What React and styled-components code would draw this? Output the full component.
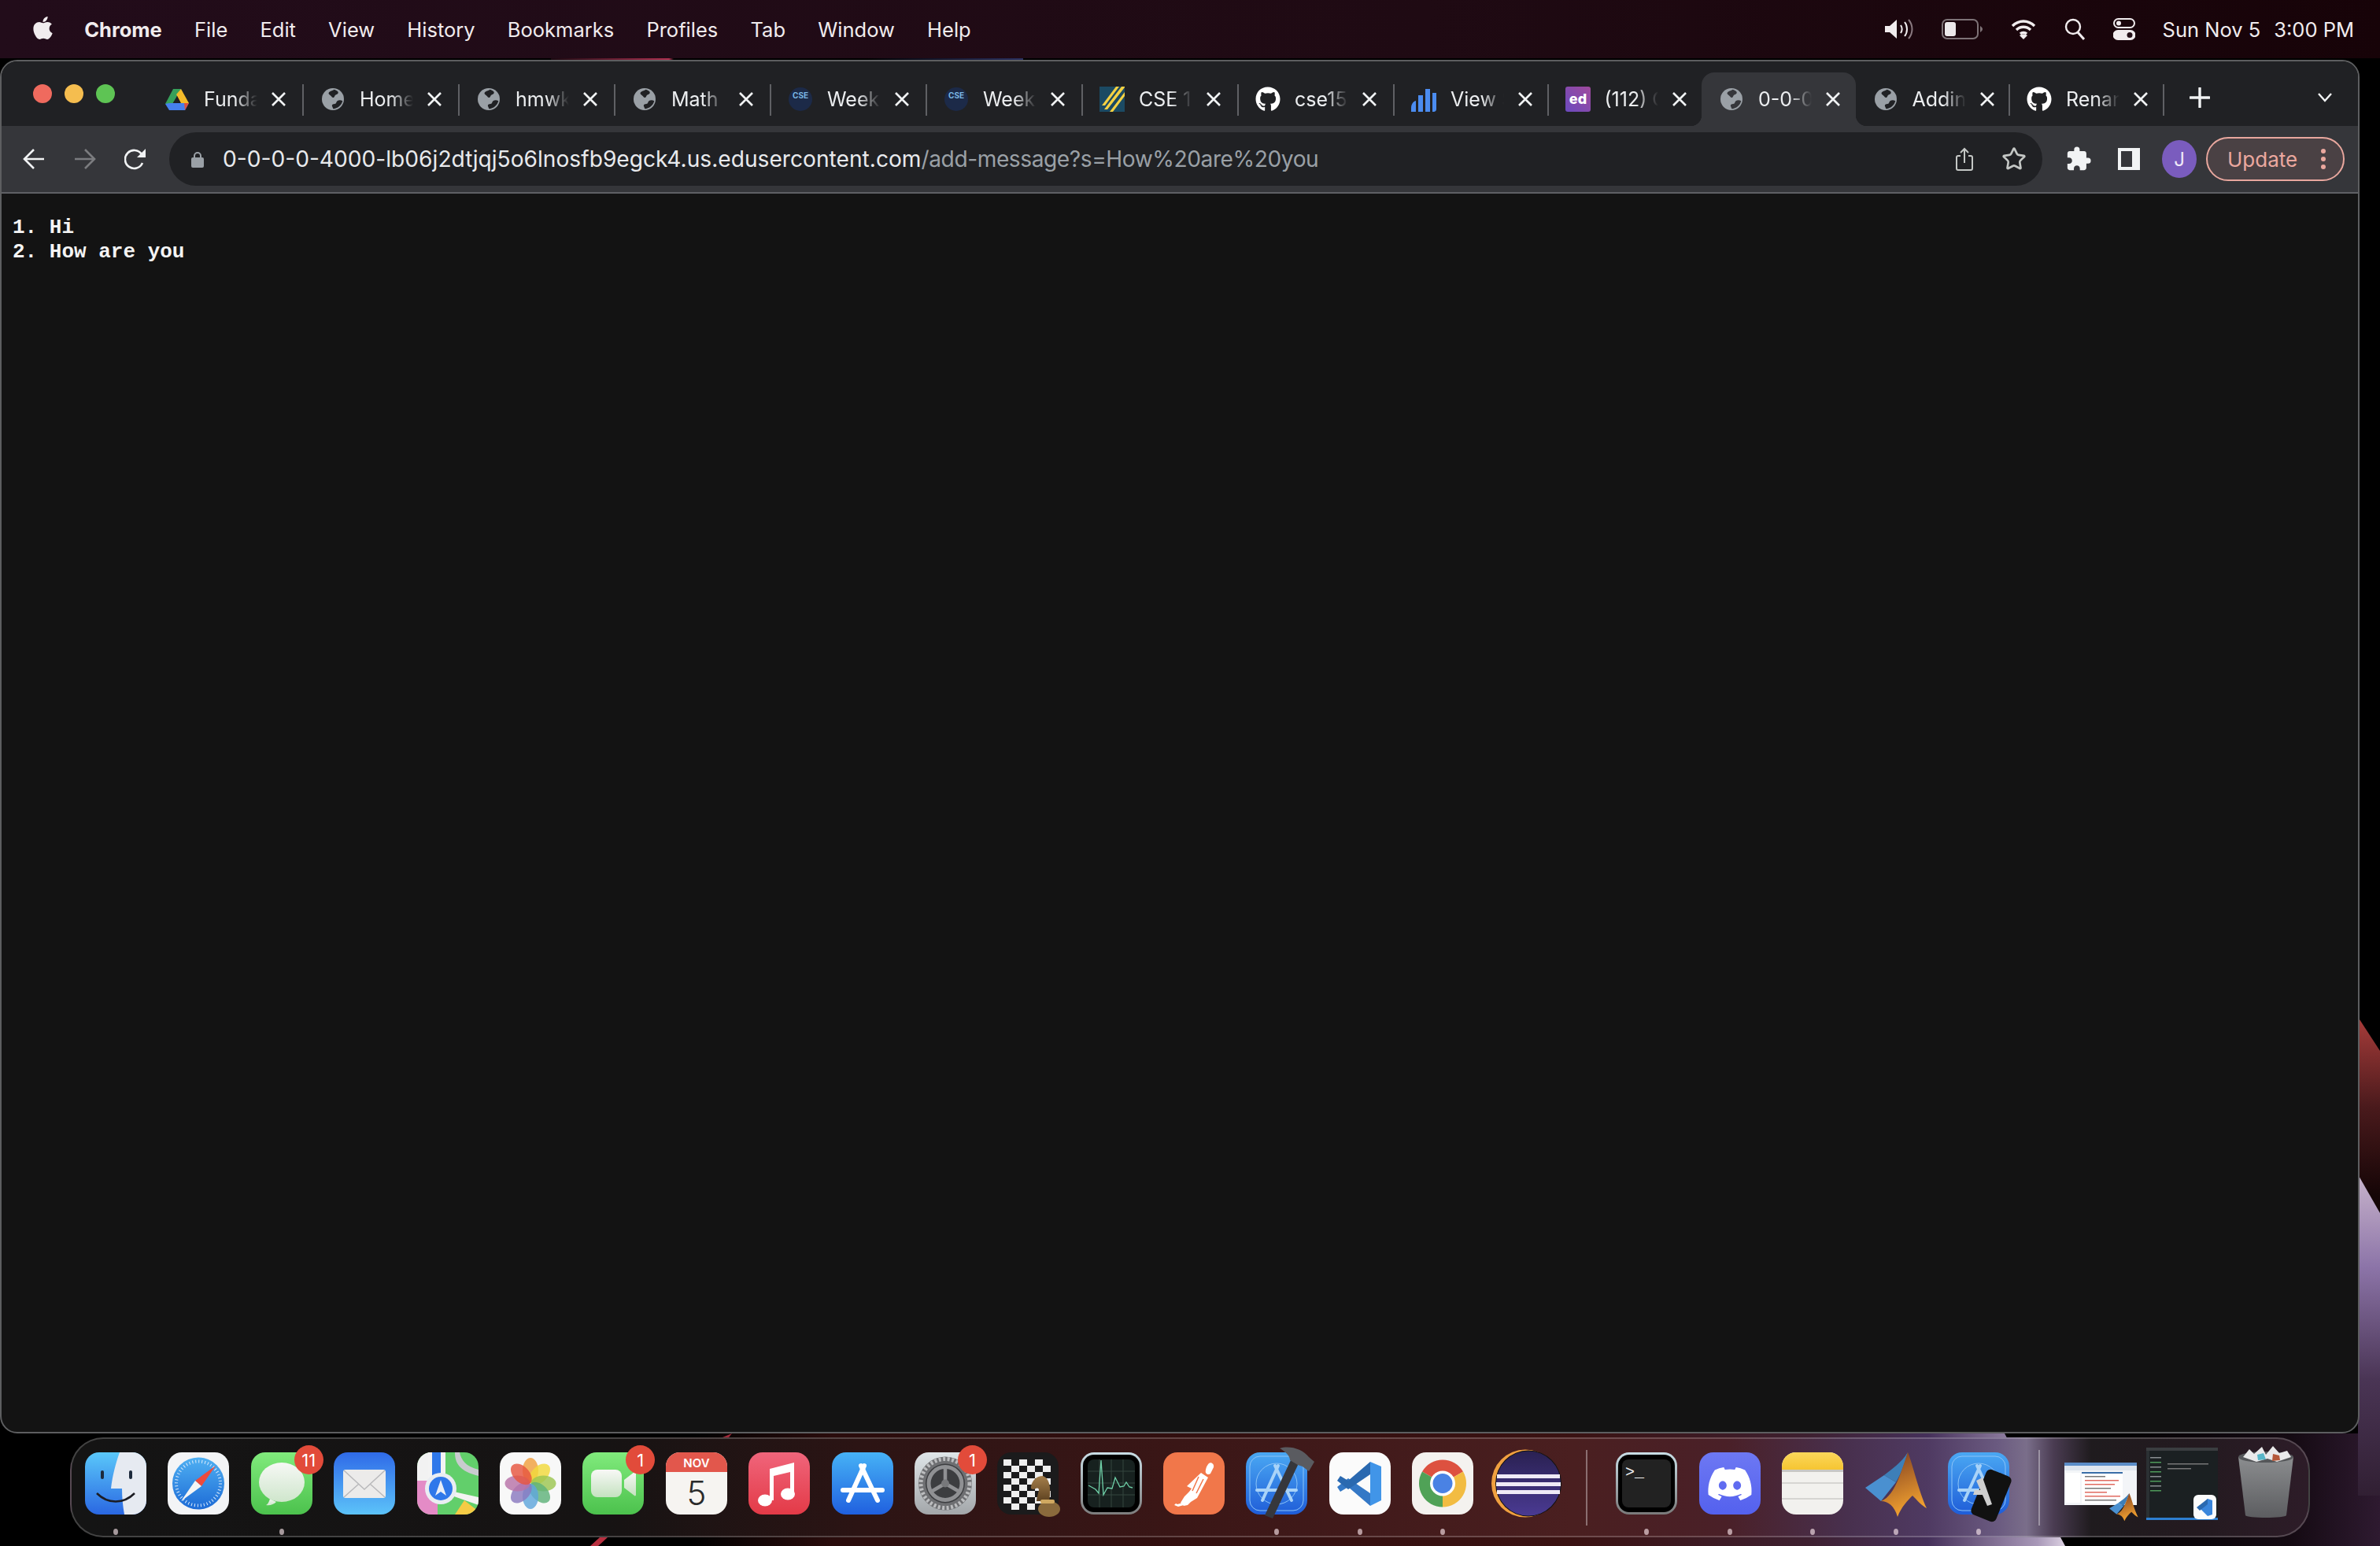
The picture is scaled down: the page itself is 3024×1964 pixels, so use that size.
import React from 'react';
import styled, { createGlobalStyle } from 'styled-components';
import { FaApple, FaGithub, FaDiscord } from 'react-icons/fa';
import { MdExtension } from 'react-icons/md';
import { Star } from 'lucide-react';

const GlobalStyle = createGlobalStyle`
  html, body { margin: 0; padding: 0; background: #000; }
  * { box-sizing: border-box; }
`;

const Desktop = styled.div`
  position: relative;
  width: 3024px;
  height: 1964px;
  overflow: hidden;
  font-family: Inter, "Liberation Sans", sans-serif;
  color: #fff;
  display: flex;
  flex-direction: column;
`;

const WallpaperArt = styled.svg`
  position: absolute;
  inset: 0;
`;

/* menu bar */
const MenuBarRow = styled.div`
  position: relative;
  height: 74px;
  flex: none;
  display: flex;
  align-items: center;
  padding: 0 33px 0 38px;
  background: linear-gradient(90deg, #220c1a, #1f0a13 60%, #170308);
  font-size: 25.5px;
  color: #f1ecee;
`;

const MenuLeft = styled.div`
  display: flex;
  align-items: center;
  gap: 41.2px;
`;

const AppleMark = styled(FaApple)`
  margin-right: -5px;
  margin-top: -4px;
`;

const MenuItem = styled.span`
  font-weight: ${p => (p.$bold ? 700 : 400)};
`;

const MenuRight = styled.div`
  margin-left: auto;
  display: flex;
  align-items: center;
  gap: 36px;
`;

const Clock = styled.span`
  display: flex;
  gap: 17px;
  margin-left: -1px;
`;

/* window */
const BrowserWindow = styled.div`
  position: relative;
  width: 2998px;
  height: 1745px;
  flex: none;
  margin-top: 2px;
  display: flex;
  flex-direction: column;
  background: #131313;
  border: 2px solid #5d5e60;
  border-radius: 22px;
  overflow: hidden;
`;

const TabStrip = styled.div`
  height: 82px;
  flex: none;
  display: flex;
  align-items: flex-end;
  background: #202124;
  padding: 0 32px 0 40px;
`;

const Lights = styled.div`
  align-self: flex-start;
  margin-top: 29px;
  margin-right: 41px;
  display: flex;
  gap: 16px;
  flex: none;
`;

const Light = styled.span`
  width: 24px;
  height: 24px;
  border-radius: 50%;
  background: ${p => p.$color};
`;

const TabItem = styled.div`
  position: relative;
  width: ${p => p.$w}px;
  height: 68px;
  flex: none;
  display: flex;
  align-items: center;
  padding-left: 22px;
  font-size: 25px;
  border-radius: 16px 16px 0 0;
  background: ${p => (p.$active ? '#35363a' : 'transparent')};

  &::after {
    content: '';
    display: ${p => (p.$hideSep ? 'none' : 'block')};
    position: absolute;
    right: -1px;
    top: 15px;
    width: 2px;
    height: 40px;
    background: #5f6064;
  }
`;

const Flare = styled.span`
  position: absolute;
  bottom: 0;
  ${p => p.$side}: -14px;
  width: 14px;
  height: 14px;
  background: radial-gradient(circle at ${p => (p.$side === 'left' ? '0 0' : '100% 0')}, transparent 14px, #35363a 14.5px);
`;

const Favicon = styled.span`
  width: 32px;
  height: 32px;
  flex: none;
  display: flex;
  align-items: center;
  justify-content: center;
`;

const TabTitle = styled.span`
  width: 68px;
  margin-left: 18px;
  flex: none;
  overflow: hidden;
  white-space: nowrap;
  color: #eceef0;
  -webkit-mask-image: linear-gradient(90deg, #000 58%, transparent 100%);
  mask-image: linear-gradient(90deg, #000 58%, transparent 100%);
`;

const CloseGlyph = styled.svg`
  margin-left: 16px;
  flex: none;
`;

const NewTab = styled.svg`
  align-self: center;
  margin: 10px 0 0 33px;
  flex: none;
`;

const TabListChevron = styled.svg`
  align-self: center;
  margin: 10px 0 0 auto;
  flex: none;
`;

const Toolbar = styled.div`
  height: 86px;
  flex: none;
  display: flex;
  align-items: center;
  background: #35363a;
  border-bottom: 2px solid #5f6064;
  padding: 0 14px 0 9px;
`;

const ToolButton = styled.div`
  width: ${p => p.$w || 64}px;
  height: 60px;
  flex: none;
  display: flex;
  align-items: center;
  justify-content: center;
  color: ${p => p.$color || '#f1f3f4'};
`;

const Omnibox = styled.div`
  width: 2380px;
  height: 68px;
  flex: none;
  margin: 0 14px 0 11px;
  display: flex;
  align-items: center;
  padding: 0 20px 0 28px;
  background: #202124;
  border-radius: 34px;
`;

const UrlText = styled.div`
  margin-left: 24px;
  font-size: 28.16px;
  white-space: nowrap;
  color: #e8eaed;
  span { color: #9aa0a6; letter-spacing: -0.45px; }
`;

const OmniActions = styled.div`
  margin-left: auto;
  display: flex;
  align-items: center;
  gap: 36px;
  color: #c4c7c5;
`;

const Avatar = styled.div`
  width: 44px;
  height: 48px;
  border-radius: 50%;
  background: #7a5cbe;
  display: flex;
  align-items: center;
  justify-content: center;
  font-size: 24px;
  color: #efe9f8;
`;

const UpdateButton = styled.div`
  width: 176px;
  height: 56px;
  flex: none;
  margin-left: 2px;
  display: flex;
  align-items: center;
  padding-left: 25px;
  gap: 30px;
  border: 2px solid #e8a79e;
  border-radius: 28px;
  background: #4a4144;
  color: #eba89f;
  font-size: 26px;
`;

const Dots = styled.div`
  display: flex;
  flex-direction: column;
  gap: 4px;
  span {
    width: 6px;
    height: 6px;
    border-radius: 50%;
    background: #eba89f;
  }
`;

const PageBody = styled.pre`
  flex: 1;
  margin: 0;
  padding: 28px 14px;
  font-family: "Liberation Mono", "Courier New", monospace;
  font-size: 26px;
  font-weight: 700;
  line-height: 30.5px;
  color: #f4f4f4;
`;

/* dock */
const Dock = styled.div`
  position: relative;
  width: 2846px;
  height: 127px;
  flex: none;
  margin: 5px 0 0 89px;
  padding: 17px 0 0 17px;
  display: flex;
  align-items: flex-start;
  gap: 27.4px;
  background: linear-gradient(90deg,
    #141414 0%, #161313 24%, #2c1414 35.5%, #3a1616 49.5%, #4a1f20 67%,
    #4a2028 74%, #48304e 79.4%, #4f3a62 83%, #6a5a80 86.1%, #7a6e8a 87.4%,
    #4a3c52 88.6%, #1f1b1e 90.3%, #241a20 95.3%, #2d1c28 100%);
  border: 2px solid rgba(255, 255, 255, 0.2);
  border-radius: 42px;
`;

const DockItem = styled.div`
  position: relative;
  width: 78px;
  flex: none;
  display: flex;
  flex-direction: column;
  align-items: center;
  svg { overflow: visible; display: block; }
`;

const RunDot = styled.span`
  width: 6px;
  height: 8px;
  margin-top: 18px;
  border-radius: 50%;
  background: rgba(255, 235, 240, ${p => (p.$on ? 0.62 : 0)});
`;

const Badge = styled.span`
  position: absolute;
  top: -9px;
  right: -14px;
  width: 37px;
  height: 37px;
  border-radius: 50%;
  background: #e24b3a;
  color: #fff;
  font-size: 22px;
  display: flex;
  align-items: center;
  justify-content: center;
`;

const DockDivider = styled.div`
  width: 2px;
  height: 96px;
  flex: none;
  margin: -3px 9.5px 0 9.5px;
  background: rgba(255, 255, 255, 0.36);
`;

/* ---- favicons ---- */
const Globe = ({ bg = '#202124' }) => (
  <svg width="28" height="28" viewBox="0 0 24 24">
    <circle cx="12" cy="12" r="12" fill="#9aa0a6" />
    <path d="M13.500 1.500c-2 1.500-5 1.500-6 3.500-.8 1.600 1.500 2.500 2.500 3.500s1.500 2 2.700 1.700c1.300-.4 1-2 2-2.700 1-.6 2.500-1 3-2.200.3-1-.5-1.800-1.200-2.300-1-.7-2-1.200-3-1.500z" fill={bg} />
    <path d="M22.500 14c-1.500-1-4-1.200-5.500-.2-1.500.9-1 2.600-2.200 3.200-1.300.5-2.800.2-3.600 1.300-.8 1.100.6 2.200 1.100 4.300 4.800-.3 9-3.800 10.200-8.600z" fill={bg} />
  </svg>
);

const DriveIcon = () => (
  <svg width="30" height="27" viewBox="0 0 30 27">
    <polygon points="10,0 20,0 14,11 9,19 0,19" fill="#36a05a" />
    <polygon points="20,0 30,18 20,18 14,7" fill="#f4bb2a" />
    <polygon points="5,18 30,18 25,27 5,27 0,19" fill="#4680ee" />
    <polygon points="24,18 30,18 25,27" fill="#dd5040" />
    <polygon points="15,9 19,17 10.500,17" fill="#202124" />
  </svg>
);

const CseIcon = () => (
  <svg width="30" height="30" viewBox="0 0 30 30">
    <circle cx="15" cy="15" r="15" fill="#1c2a48" />
    <text x="15" y="14" fontSize="10" fontWeight="700" fontFamily="Inter" textAnchor="middle" fill="#7ab6e4">CSE</text>
  </svg>
);

const StripesIcon = () => (
  <svg width="32" height="32" viewBox="0 0 32 32">
    <rect width="32" height="32" fill="#1b4a63" />
    <path d="M21 0h4L7 24H3zM28 0h4v1L10 29H6zM32 7v5L17 32h-4z" fill="#f5d142" />
  </svg>
);

const BarsIcon = () => (
  <svg width="32" height="32" viewBox="0 0 32 32">
    <path d="M0 32v-5c0-4 2-8 6-9v14zM9 32V11h6v21zM18 32V3h6v29zM27 32V8h5v21c0 2-2 3-3 3z" fill="#4b8cf0" />
  </svg>
);

const EdIcon = () => (
  <svg width="32" height="32" viewBox="0 0 32 32">
    <defs>
      <linearGradient id="edG" x1="0" y1="1" x2="1" y2="0">
        <stop offset="0" stopColor="#6a4abf" />
        <stop offset="1" stopColor="#a04a9c" />
      </linearGradient>
    </defs>
    <rect width="32" height="32" rx="3" fill="url(#edG)" />
    <text x="16" y="22" fontSize="18" fontWeight="800" fontFamily="Inter" textAnchor="middle" fill="#fff">ed</text>
  </svg>
);

const tabs = [
  { w: 198, icon: <DriveIcon />, title: 'Funda' },
  { w: 198, icon: <Globe />, title: 'Homew' },
  { w: 198, icon: <Globe />, title: 'hmwk4' },
  { w: 198, icon: <Globe />, title: 'Math 2' },
  { w: 198, icon: <CseIcon />, title: 'Week' },
  { w: 198, icon: <CseIcon />, title: 'Week' },
  { w: 198, icon: <StripesIcon />, title: 'CSE 15' },
  { w: 198, icon: <FaGithub size={32} color="#fff" />, title: 'cse15l' },
  { w: 195.5, icon: <BarsIcon />, title: 'View S' },
  { w: 195.5, icon: <EdIcon />, title: '(112) C', hideSep: true },
  { w: 195.5, icon: <Globe bg="#35363a" />, title: '0-0-0', active: true, hideSep: true },
  { w: 195.5, icon: <Globe />, title: 'Adding' },
  { w: 195.5, icon: <FaGithub size={32} color="#fff" />, title: 'Renan' },
];

/* ---- dock icons, all drawn on a 78x79 tile ---- */
const V = '0 0 78 79';

const Tile = ({ fill }) => <rect width="78" height="79" rx="18" fill={fill} />;

const Grad = ({ id, a, b, x2 = 0, y2 = 1 }) => (
  <linearGradient id={id} x1="0" y1="0" x2={x2} y2={y2}>
    <stop offset="0" stopColor={a} />
    <stop offset="1" stopColor={b} />
  </linearGradient>
);

const Finder = () => (
  <svg width="78" height="79" viewBox={V}>
    <defs><Grad id="fin" a="#5ac8fa" b="#2a67e2" /></defs>
    <Tile fill="url(#fin)" />
    <path d="M44 0h16a18 18 0 0 1 18 18v43a18 18 0 0 1-18 18H50c-2-11-3-22-3-33H33c2-17 6-32 11-46z" fill="#e6eaf1" />
    <rect x="20" y="23" width="4" height="11" rx="2" fill="#1d2a3c" />
    <rect x="56" y="23" width="4" height="11" rx="2" fill="#1d2a3c" />
    <path d="M15 52c14 14 34 14 48 0" fill="none" stroke="#1c1c22" strokeWidth="2.500" />
  </svg>
);

const Safari = () => (
  <svg width="78" height="79" viewBox={V}>
    <defs><Grad id="saf" a="#4fb0f2" b="#1d6bd6" /></defs>
    <Tile fill="#f3f4f6" />
    <circle cx="39" cy="39.500" r="33" fill="url(#saf)" />
    <circle cx="39" cy="39.500" r="28" fill="none" stroke="#dbeafb" strokeWidth="4" strokeDasharray="1 3" />
    <polygon points="61,17 35,36 43,43" fill="#ee4a3c" />
    <polygon points="17,62 35,36 43,43" fill="#f5f5f5" />
  </svg>
);

const Messages = () => (
  <svg width="78" height="79" viewBox={V}>
    <defs>
      <Grad id="msg" a="#80ea7c" b="#4cc24d" />
      <Grad id="msb" a="#f6f8f5" b="#cfe6cc" />
    </defs>
    <Tile fill="url(#msg)" />
    <path d="M24 59c-1 4-3 7-5 8 5 1 10-1 13-4z" fill="url(#msb)" />
    <ellipse cx="39" cy="38" rx="29" ry="25" fill="url(#msb)" />
  </svg>
);

const Mail = () => (
  <svg width="78" height="79" viewBox={V}>
    <defs><Grad id="mai" a="#2f6ae8" b="#5cc3f9" /></defs>
    <Tile fill="url(#mai)" />
    <rect x="12" y="22" width="54" height="36" rx="3" fill="#ecebea" />
    <path d="M13 23l26 24 26-24M13 57l19-17M65 57L46 40" fill="none" stroke="#b9b9bb" strokeWidth="1.500" />
  </svg>
);

const Maps = () => (
  <svg width="78" height="79" viewBox={V}>
    <clipPath id="mapc"><rect width="78" height="79" rx="18" /></clipPath>
    <g clipPath="url(#mapc)">
      <rect width="78" height="79" fill="#62cf6b" />
      <path d="M0 0h19v36L0 54z" fill="#f2f2f2" />
      <path d="M0 36h26v43H0z" fill="#e48bc6" />
      <path d="M14 0h22v48H14z" fill="#f3f3f3" />
      <path d="M19 0h11v44H19z" fill="#2f78ea" />
      <path d="M48 0c0 14 6 24 30 30v-8C62 18 56 10 54 0z" fill="#c9cbcf" />
      <path d="M20 44l58 13v10L30 50z" fill="#f3f3f3" />
      <path d="M48 79l12-18 18 14v4z" fill="#f5cb45" />
      <circle cx="30" cy="46" r="20" fill="#e9edf2" />
      <circle cx="30" cy="46" r="15" fill="#2f78ea" />
      <path d="M30 35l7 20-7-5-7 5z" fill="#e9eef7" />
    </g>
  </svg>
);

const petals = ['#f0a040', '#f2d93c', '#9cc650', '#5fb27a', '#5fa6dc', '#8a79c0', '#b873a8', '#e6563f'];
const Photos = () => (
  <svg width="78" height="79" viewBox={V}>
    <Tile fill="#f8f8f8" />
    {petals.map((c, i) => (
      <ellipse key={c} cx="39" cy="23" rx="10" ry="16" fill={c} opacity="0.82" transform={`rotate(${i * 45} 39 39.500)`} />
    ))}
  </svg>
);

const FaceTime = () => (
  <svg width="78" height="79" viewBox={V}>
    <defs>
      <Grad id="ftg" a="#80ea7c" b="#4cc24d" />
      <Grad id="ftw" a="#f8f8f6" b="#c4e2c0" />
    </defs>
    <Tile fill="url(#ftg)" />
    <rect x="11" y="22" width="39" height="35" rx="8" fill="url(#ftw)" />
    <path d="M53 35l13-10c1-1 2 0 2 1v28c0 1-1 2-2 1L53 45z" fill="url(#ftw)" />
  </svg>
);

const Calendar = () => (
  <svg width="78" height="79" viewBox={V}>
    <clipPath id="calc"><rect width="78" height="79" rx="18" /></clipPath>
    <g clipPath="url(#calc)">
      <rect width="78" height="79" fill="#f6f4f1" />
      <rect width="78" height="25" fill="#e2574c" />
    </g>
    <text x="39" y="19" fontSize="15" fontWeight="600" fontFamily="Inter" textAnchor="middle" fill="#fff">NOV</text>
    <text x="39" y="67" fontSize="42" fontFamily="Inter" fontWeight="300" textAnchor="middle" fill="#2a2a2a">5</text>
  </svg>
);

const Music = () => (
  <svg width="78" height="79" viewBox={V}>
    <defs><Grad id="mus" a="#f0657b" b="#e33a47" /></defs>
    <Tile fill="url(#mus)" />
    <path d="M27 21l31-8v40h-5V25l-21 5v31h-5z" fill="#fff" />
    <ellipse cx="21" cy="61" rx="9" ry="7.500" fill="#fff" />
    <ellipse cx="50" cy="53" rx="9" ry="7.500" fill="#fff" />
  </svg>
);

const ALetter = ({ stroke = '#fff', w = 6 }) => (
  <g stroke={stroke} strokeWidth={w} strokeLinecap="round" fill="none">
    <path d="M41 17L21 61" />
    <path d="M37 17l21 44" />
    <path d="M14 48h50" />
  </g>
);

const AppStore = () => (
  <svg width="78" height="79" viewBox={V}>
    <defs><Grad id="aps" a="#46b2f6" b="#2060df" /></defs>
    <Tile fill="url(#aps)" />
    <ALetter />
  </svg>
);

const Prefs = () => (
  <svg width="78" height="79" viewBox={V}>
    <defs><Grad id="prf" a="#dfe5e8" b="#a3a7aa" /></defs>
    <Tile fill="url(#prf)" />
    <circle cx="39" cy="39.500" r="34" fill="#6e6f72" />
    <circle cx="39" cy="39.500" r="31" fill="none" stroke="#bcbdbf" strokeWidth="5" strokeDasharray="3 2.500" />
    <circle cx="39" cy="39.500" r="25" fill="#3c3d40" />
    <circle cx="39" cy="39.500" r="21" fill="none" stroke="#8f9093" strokeWidth="5" />
    <path d="M39 39.500V19M39 39.500L21 50M39 39.500L57 50" stroke="#8f9093" strokeWidth="4.500" />
    <circle cx="39" cy="39.500" r="5" fill="#77787b" />
  </svg>
);

const checker = [];
for (let r = 0; r < 8; r++) {
  for (let c = 0; c < 6; c++) {
    if ((r + c) % 2 === 0) checker.push([8 + c * 10, 9 + r * 8]);
  }
}
const Chess = () => (
  <svg width="78" height="79" viewBox={V}>
    <defs><Grad id="knt" a="#a57f4c" b="#5e4220" /></defs>
    <Tile fill="#1b1b1c" />
    {checker.map(([x, y]) => <rect key={`${x}-${y}`} x={x} y={y} width="10" height="8" fill="#efefef" />)}
    <path d="M58 30c-8 0-14 6-15 14-1 3 3 4 6 2 3-1 4 0 4 2-1 5-3 10-3 14h16c2-10 3-28-8-32z" fill="url(#knt)" />
    <ellipse cx="66" cy="72" rx="14" ry="10" fill="#8a6a3c" />
    <rect x="55" y="60" width="18" height="5" rx="2" fill="#d0a860" />
  </svg>
);

const Activity = () => (
  <svg width="78" height="79" viewBox={V}>
    <defs><Grad id="act" a="#c9dde5" b="#7d7d7d" /></defs>
    <rect width="78" height="79" rx="17" fill="url(#act)" />
    <rect x="3" y="3" width="72" height="73" rx="14" fill="#000" />
    <rect x="9" y="9" width="60" height="61" rx="8" fill="#17211f" />
    <path d="M9 24h60M9 39h60M9 54h60M24 9v61M39 9v61M54 9v61" stroke="#34463f" strokeWidth="1" />
    <path d="M10 42l9 5 4 5 3-42 3 44 5-9 6 1 4-14 6 12 5-1 3-5 4 6 4 1" fill="none" stroke="#6fd0a8" strokeWidth="1.300" />
  </svg>
);

const Postman = () => (
  <svg width="78" height="79" viewBox={V}>
    <Tile fill="#f1774a" />
    <path d="M58 14c3-2 7 1 6 5l-4 8c-2 2-5 1-6-1-1-3 1-9 4-12z" fill="#fff" />
    <path d="M48 26l9 6-14 26-8 5-4 4-5 1-4-4 5-8 6-6 3-4-6-3z" fill="#fff" />
    <path d="M45 31l-8 18M51 34l-9 18" stroke="#f1774a" strokeWidth="1.500" />
    <path d="M25 64l-7 2-2-1-2 2 5 2 7-2z" fill="#fff" />
  </svg>
);

const XcodeBase = ({ id }) => (
  <>
    <defs><Grad id={id} a="#4aa8f3" b="#1f5dd8" /></defs>
    <Tile fill={`url(#${id})`} />
    <rect x="5" y="5" width="68" height="69" rx="13" fill="none" stroke="#8cc4f7" strokeWidth="1" />
    <circle cx="39" cy="40" r="26" fill="none" stroke="#8cc4f7" strokeWidth="1" />
    <ALetter stroke="#a9d3f8" w={4} />
  </>
);

const Xcode = () => (
  <svg width="78" height="79" viewBox={V}>
    <XcodeBase id="xc" />
    <path d="M24 80L58 8l10 4-34 72z" fill="#36373c" />
    <path d="M43-5C56-9 72-4 80 6l7 6-7 12-8-6-6-2-10-6c0-6-6-11-13-15z" fill="#5a5b60" />
  </svg>
);

const VsCode = () => (
  <svg width="78" height="79" viewBox={V}>
    <Tile fill="#fbfbfb" />
    <polygon points="52,68 52,52 24,33 10,44 14,50 24,44" fill="#3478c6" />
    <polygon points="52,12 52,28 24,47 10,36 14,30 24,36" fill="#2a69b0" />
    <polygon points="52,12 66,18 66,61 52,68" fill="#4195e8" />
  </svg>
);

const Chrome = () => (
  <svg width="78" height="79" viewBox={V}>
    <Tile fill="#f4f2ef" />
    <path d="M39 39.500L13 24.500A30 30 0 0 1 65 24.500Z" fill="#dd5140" />
    <path d="M39 39.500L13 24.500A30 30 0 0 0 39 69.500Z" fill="#50a257" />
    <path d="M39 39.500L65 24.500A30 30 0 0 1 39 69.500Z" fill="#f2bc42" />
    <circle cx="39" cy="39.500" r="16" fill="#fff" />
    <circle cx="39" cy="39.500" r="12.500" fill="#4a82e4" />
  </svg>
);

const Eclipse = () => (
  <svg width="78" height="79" viewBox={V}>
    <defs><Grad id="ecl" a="#2a2152" b="#4a3a92" /></defs>
    <circle cx="38" cy="39.500" r="43" fill="#f0a040" />
    <circle cx="42" cy="39.500" r="42" fill="#111" />
    <circle cx="42" cy="39.500" r="41" fill="url(#ecl)" />
    <rect x="2" y="28" width="80" height="5" fill="#efeaf6" />
    <rect x="1" y="38" width="82" height="5" fill="#efeaf6" />
    <rect x="2" y="48" width="80" height="5" fill="#efeaf6" />
  </svg>
);

const Terminal = () => (
  <svg width="78" height="79" viewBox={V}>
    <defs><Grad id="ter" a="#c9dee6" b="#7a7a7a" /></defs>
    <rect width="78" height="79" rx="17" fill="url(#ter)" />
    <rect x="3" y="3" width="72" height="73" rx="14" fill="#000" />
    <rect x="8" y="9" width="62" height="61" rx="8" fill="#222" />
    <text x="12" y="31" fontSize="20" fontFamily="Liberation Mono" fill="#f2f2f2">&gt;_</text>
  </svg>
);

const Discord = () => (
  <svg width="78" height="79" viewBox={V}>
    <defs><Grad id="dis" a="#6d78f3" b="#5461ee" /></defs>
    <Tile fill="url(#dis)" />
    <FaDiscord x="9" y="10" size={60} color="#fff" />
  </svg>
);

const Notes = () => (
  <svg width="78" height="79" viewBox={V}>
    <defs><Grad id="not" a="#fbd75a" b="#f6c532" /></defs>
    <Tile fill="#f2f1ee" />
    <path d="M18 0h42a18 18 0 0 1 18 18v4H0v-4A18 18 0 0 1 18 0z" fill="url(#not)" />
    <rect y="22" width="78" height="3" fill="#c9c8c4" />
    <rect y="38" width="78" height="2" fill="#d6d5d2" />
    <rect y="58" width="78" height="2" fill="#d6d5d2" />
  </svg>
);

const MatlabShape = ({ id }) => (
  <>
    <defs><Grad id={id} a="#7a3a20" b="#f0a030" x2={0.3} /></defs>
    <polygon points="0,45 24,29 39,38 20,62" fill="#4a90d0" />
    <path d="M24 29c10-8 22-16 30-29 -4 14-8 26-15 38z" fill="#3d7fb8" />
    <path d="M54 0c6 14 14 50 24 71-6-3-12-10-18-16-6 6-14 14-19 27-4-14-12-20-21-20 10-4 16-14 22-28 4-10 8-22 12-34z" fill={`url(#${id})`} />
  </>
);

const Matlab = () => (
  <svg width="78" height="79" viewBox={V}>
    <MatlabShape id="mat" />
  </svg>
);

const Instruments = () => (
  <svg width="78" height="79" viewBox={V}>
    <XcodeBase id="ins" />
    <rect x="38" y="24" width="34" height="62" rx="6" fill="#111" transform="rotate(22 55 55)" />
    <path d="M36 36l8-4 12 34-6 2zM34 48h14v6H32z" fill="#cfcfcf" />
  </svg>
);

const MatlabThumb = () => (
  <svg width="78" height="79" viewBox={V}>
    <rect x="-6" y="13" width="92" height="54" fill="#f3f5f8" />
    <rect x="-6" y="13" width="92" height="4" fill="#5b8dc8" />
    <rect x="-6" y="17" width="92" height="6" fill="#dfe6ef" />
    <rect x="-4" y="26" width="18" height="38" fill="#fff" />
    <rect x="16" y="25" width="52" height="40" fill="#fff" />
    <rect x="16" y="25" width="52" height="2" fill="#3a6ea8" />
    {[30, 35, 40, 45, 50, 55, 60].map((y, i) => (
      <rect key={y} x="20" y={y} width={26 + (i * 17) % 22} height="1.500" fill={i % 3 ? '#e06a60' : '#777'} />
    ))}
    <g transform="translate(51 52) scale(.47 .43)"><MatlabShape id="mat2" /></g>
  </svg>
);

const CodeThumb = () => (
  <svg width="78" height="79" viewBox={V}>
    <rect x="-7" y="-6" width="91" height="92" fill="#1b2022" />
    <rect x="-7" y="-6" width="91" height="4" fill="#3a3d40" />
    <rect x="-7" y="-2" width="4" height="86" fill="#2b3033" />
    {[6, 12, 18, 24, 30, 36, 42, 48].map((y, i) => (
      <rect key={y} x="-2" y={y} width="14" height="1.500" fill={i % 2 ? '#4f9a5a' : '#8a8f92'} />
    ))}
    <rect x="20" y="14" width="52" height="1.500" fill="#777" />
    <rect x="20" y="20" width="30" height="1.500" fill="#777" />
    <rect x="-7" y="83" width="91" height="3" fill="#2d7fd0" />
    <rect x="53" y="54" width="29" height="31" rx="6" fill="#fcfcfc" />
    <polygon points="71,59 77,61 77,79 71,81 61,71" fill="#3a86dc" />
    <polygon points="71,59 71,66 61,74 57,70" fill="#2a69b0" />
  </svg>
);

const Trash = () => (
  <svg width="78" height="79" viewBox={V}>
    <defs><Grad id="tra" a="#8b8d8f" b="#5c5d60" /></defs>
    <path d="M4 6h70l-9 74c-1 4-51 4-52 0z" fill="url(#tra)" />
    <ellipse cx="39" cy="6" rx="35" ry="7" fill="#55575a" />
    <path d="M10 6l8-10 6 6 10-9 5 10 9-11 8 9 10-3 5 8-18 6-12-4-14 4z" fill="#e9e9ea" />
    <path d="M28 3l8-2 3 8-10 1z" fill="#57b6c8" />
    <path d="M48 2l8 2 1 6-10 1z" fill="#b4583a" />
  </svg>
);

const dockApps = [
  { icon: <Finder />, on: true },
  { icon: <Safari /> },
  { icon: <Messages />, on: true, badge: '11' },
  { icon: <Mail /> },
  { icon: <Maps /> },
  { icon: <Photos /> },
  { icon: <FaceTime />, badge: '1' },
  { icon: <Calendar /> },
  { icon: <Music /> },
  { icon: <AppStore /> },
  { icon: <Prefs />, badge: '1' },
  { icon: <Chess /> },
  { icon: <Activity /> },
  { icon: <Postman /> },
  { icon: <Xcode />, on: true },
  { icon: <VsCode />, on: true },
  { icon: <Chrome />, on: true },
  { icon: <Eclipse /> },
  { divider: true },
  { icon: <Terminal />, on: true },
  { icon: <Discord />, on: true },
  { icon: <Notes />, on: true },
  { icon: <Matlab />, on: true },
  { icon: <Instruments />, on: true },
  { divider: true },
  { icon: <MatlabThumb /> },
  { icon: <CodeThumb /> },
  { icon: <Trash /> },
];

const menuItems = ['File', 'Edit', 'View', 'History', 'Bookmarks', 'Profiles', 'Tab', 'Window', 'Help'];

const Wallpaper = () => (
  <WallpaperArt width="3024" height="1964" viewBox="0 0 3024 1964">
    <defs>
      <linearGradient id="wpRed" x1="0" y1="1292" x2="0" y2="1520" gradientUnits="userSpaceOnUse">
        <stop offset="0" stopColor="#a83c3a" />
        <stop offset="0.5" stopColor="#4a1a1c" />
        <stop offset="1" stopColor="#140506" />
      </linearGradient>
      <linearGradient id="wpLilac" x1="0" y1="1492" x2="0" y2="1964" gradientUnits="userSpaceOnUse">
        <stop offset="0" stopColor="#c8b4cc" />
        <stop offset="0.25" stopColor="#8c74a8" />
        <stop offset="0.55" stopColor="#4a3555" />
        <stop offset="1" stopColor="#261624" />
      </linearGradient>
      <linearGradient id="wpBase" x1="0" y1="0" x2="3024" y2="0" gradientUnits="userSpaceOnUse">
        <stop offset="0" stopColor="#000" />
        <stop offset="0.29" stopColor="#000" />
        <stop offset="0.35" stopColor="#2a0c0c" />
        <stop offset="0.66" stopColor="#3a1212" />
        <stop offset="0.76" stopColor="#3e2030" />
        <stop offset="0.81" stopColor="#45305a" />
        <stop offset="0.856" stopColor="#a898b8" />
        <stop offset="0.87" stopColor="#e6dcea" />
      </linearGradient>
      <linearGradient id="wpTail" x1="2640" y1="0" x2="3024" y2="0" gradientUnits="userSpaceOnUse">
        <stop offset="0" stopColor="#000" />
        <stop offset="0.7" stopColor="#140a12" />
        <stop offset="1" stopColor="#2e1a30" />
      </linearGradient>
      <linearGradient id="wpSliver" x1="700" y1="0" x2="1300" y2="0" gradientUnits="userSpaceOnUse">
        <stop offset="0" stopColor="#1a0810" />
        <stop offset="0.25" stopColor="#b03050" />
        <stop offset="0.26" stopColor="#000" />
        <stop offset="0.67" stopColor="#000" />
        <stop offset="1" stopColor="#2a3060" />
      </linearGradient>
    </defs>
    <rect width="3024" height="1964" fill="#000" />
    <rect x="700" y="74" width="600" height="2" fill="url(#wpSliver)" />
    <rect y="1821" width="3024" height="143" fill="url(#wpBase)" />
    <polygon points="2547,1821 3024,1821 3024,1964 2624,1964" fill="url(#wpTail)" />
    <polygon points="2996,1292 3024,1335 3024,1541 2996,1492" fill="url(#wpRed)" />
    <polygon points="2996,1492 3024,1541 3024,1900 2996,1900" fill="url(#wpLilac)" />
    <polygon points="918,1826 930,1821 926,1826" fill="#a02a3a" />
    <polygon points="750,1964 762,1953 772,1953 760,1964" fill="#b83040" />
  </WallpaperArt>
);

const CloseX = () => (
  <CloseGlyph width="22" height="22" viewBox="0 0 22 22">
    <path d="M3 3l16 16M19 3L3 19" stroke="#f1f3f4" strokeWidth="2.600" />
  </CloseGlyph>
);

export default function App() {
  return (
    <Desktop>
      <GlobalStyle />
      <Wallpaper />

      <MenuBarRow>
        <MenuLeft>
          <AppleMark size={33} color="#f1ecee" />
          <MenuItem $bold>Chrome</MenuItem>
          {menuItems.map(m => <MenuItem key={m}>{m}</MenuItem>)}
        </MenuLeft>
        <MenuRight>
          <svg width="36" height="28" viewBox="0 0 36 28">
            <path d="M0 10h6l9-8v24l-9-8H0z" fill="#f1ecee" />
            <path d="M20 9c2 3 2 7 0 10M25 5c4 5 4 13 0 18" fill="none" stroke="#f1ecee" strokeWidth="2" />
            <path d="M30 2c6 7 6 17 0 24" fill="none" stroke="#8a7a80" strokeWidth="2" />
          </svg>
          <svg width="52" height="26" viewBox="0 0 52 26">
            <rect x="1" y="1" width="45" height="24" rx="6" fill="none" stroke="#7d7276" strokeWidth="2" />
            <rect x="4" y="4" width="14" height="18" rx="3" fill="#ece8ea" />
            <path d="M49 9c2 1 3 3 3 4s-1 3-3 4z" fill="#7d7276" />
          </svg>
          <svg width="32" height="26" viewBox="0 0 32 26">
            <path d="M2 9c8-8 20-8 28 0M7 14c5-5 13-5 18 0M12 19c2-2 6-2 8 0" fill="none" stroke="#f1ecee" strokeWidth="3.400" />
            <path d="M16 26l-5-5c3-2 7-2 10 0z" fill="#f1ecee" />
          </svg>
          <svg width="26" height="28" viewBox="0 0 26 28">
            <circle cx="11" cy="11" r="9" fill="none" stroke="#f1ecee" strokeWidth="2.400" />
            <path d="M17 18l8 9" stroke="#f1ecee" strokeWidth="3" />
          </svg>
          <svg width="28" height="28" viewBox="0 0 28 28">
            <rect x="1" y="1" width="26" height="11" rx="5.500" fill="none" stroke="#f1ecee" strokeWidth="2" />
            <circle cx="7" cy="6.500" r="3" fill="#f1ecee" />
            <path d="M6 15h16a6.500 6.500 0 0 1 0 13H6a6.500 6.500 0 0 1 0-13z" fill="#f1ecee" />
            <circle cx="21" cy="21.500" r="3.500" fill="#241018" />
          </svg>
          <Clock>
            <span>Sun Nov 5</span>
            <span>3:00 PM</span>
          </Clock>
        </MenuRight>
      </MenuBarRow>

      <BrowserWindow>
        <TabStrip>
          <Lights>
            <Light $color="#ef6a5e" />
            <Light $color="#f5bd4f" />
            <Light $color="#5ec454" />
          </Lights>
          {tabs.map((t, i) => (
            <TabItem key={i} $w={t.w} $active={t.active} $hideSep={t.hideSep}>
              {t.active && <Flare $side="left" />}
              {t.active && <Flare $side="right" />}
              <Favicon>{t.icon}</Favicon>
              <TabTitle>{t.title}</TabTitle>
              <CloseX />
            </TabItem>
          ))}
          <NewTab width="26" height="26" viewBox="0 0 26 26">
            <path d="M13 1v24M1 13h24" stroke="#f1f3f4" strokeWidth="3.400" strokeLinecap="round" />
          </NewTab>
          <TabListChevron width="20" height="14" viewBox="0 0 20 14">
            <path d="M2 2l8 9 8-9" fill="none" stroke="#f1f3f4" strokeWidth="2.400" />
          </TabListChevron>
        </TabStrip>

        <Toolbar>
          <ToolButton>
            <svg width="28" height="26" viewBox="0 0 28 26"><path d="M27 13H3M14 1L2 13l12 12" fill="none" stroke="currentColor" strokeWidth="2.600" /></svg>
          </ToolButton>
          <ToolButton $w={65} $color="#7b7c7f">
            <svg width="28" height="26" viewBox="0 0 28 26"><path d="M1 13h24M14 1l12 12-12 12" fill="none" stroke="currentColor" strokeWidth="2.600" /></svg>
          </ToolButton>
          <ToolButton>
            <svg width="28" height="28" viewBox="0 0 28 28">
              <path d="M23 19a11.500 11.500 0 1 1-1-11" fill="none" stroke="currentColor" strokeWidth="2.600" />
              <path d="M27 1v11H16z" fill="currentColor" />
            </svg>
          </ToolButton>
          <Omnibox>
            <svg width="16" height="21" viewBox="0 0 16 21">
              <path d="M4 9V6a4 4 0 0 1 8 0v3" fill="none" stroke="#9aa0a6" strokeWidth="2" />
              <rect y="8" width="16" height="13" rx="2" fill="#9aa0a6" />
            </svg>
            <UrlText>0-0-0-0-4000-lb06j2dtjqj5o6lnosfb9egck4.us.edusercontent.com<span>/add-message?s=How%20are%20you</span></UrlText>
            <OmniActions>
              <svg width="22" height="30" viewBox="0 0 22 30">
                <path d="M6 11H3a2 2 0 0 0-2 2v14a2 2 0 0 0 2 2h16a2 2 0 0 0 2-2V13a2 2 0 0 0-2-2h-3" fill="none" stroke="currentColor" strokeWidth="2" />
                <path d="M11 20V2M6 7l5-5 5 5" fill="none" stroke="currentColor" strokeWidth="2" />
              </svg>
              <Star size={32} strokeWidth={2} />
            </OmniActions>
          </Omnibox>
          <ToolButton>
            <MdExtension size={34} />
          </ToolButton>
          <ToolButton>
            <svg width="28" height="28" viewBox="0 0 28 28">
              <path d="M0 0h28v28H0zM4 4v20h14V4z" fillRule="evenodd" fill="currentColor" />
            </svg>
          </ToolButton>
          <ToolButton><Avatar>J</Avatar></ToolButton>
          <UpdateButton>
            Update
            <Dots><span /><span /><span /></Dots>
          </UpdateButton>
        </Toolbar>

        <PageBody>{'1. Hi\n2. How are you'}</PageBody>
      </BrowserWindow>

      <Dock>
        {dockApps.map((app, i) => (
          app.divider
            ? <DockDivider key={i} />
            : (
              <DockItem key={i}>
                {app.icon}
                {app.badge && <Badge>{app.badge}</Badge>}
                <RunDot $on={app.on} />
              </DockItem>
            )
        ))}
      </Dock>
    </Desktop>
  );
}
